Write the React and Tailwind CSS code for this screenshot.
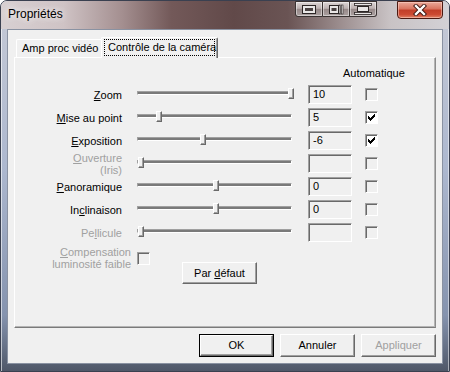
import React from "react";

const Check = () => (
  <svg width="7" height="7" viewBox="0 0 7 7" shapeRendering="crispEdges">
    {[2, 3, 4, 3, 2, 1, 0].map((t, i) => (
      <rect key={i} x={i} y={t} width="1" height="3" fill="#000" />
    ))}
  </svg>
);

const Checkbox = ({ checked }) => (
  <div
    className={`w-[13px] h-[13px] shrink-0 border border-t-[#a0a0a0] border-l-[#a0a0a0] border-b-white border-r-white shadow-[inset_1px_1px_0_#696969] flex items-center justify-center ${
      checked ? "bg-white" : "bg-[#f0f0f0]"
    }`}
  >
    {checked && <Check />}
  </div>
);

const Slider = ({ thumb }) => (
  <div className="relative w-[155px] h-[19px] shrink-0 pt-[6px]">
    <div className="h-[4px] border-t border-l border-t-[#a0a0a0] border-l-[#a0a0a0] border-b border-r border-b-white border-r-white bg-[#7a7a7a]" />
    <div
      className={`absolute top-[3px] ${thumb} w-[6px] h-[11px] bg-[#f0f0f0] border border-t-white border-l-white border-r-[#696969] border-b-[#696969] shadow-[inset_-1px_-1px_0_#a0a0a0]`}
    />
  </div>
);

const Row = ({ label, thumb, value, checked, disabled }) => (
  <div className="flex items-center h-[19px]">
    <div
      className={`w-[107px] shrink-0 text-right leading-[12px] ${
        disabled ? "text-[#a0a0a0]" : "text-black"
      }`}
    >
      {label}
    </div>
    <div className="ml-[15px]">
      <Slider thumb={thumb} />
    </div>
    <div className="ml-[16px] w-[44px] h-[19px] shrink-0 border border-t-[#a0a0a0] border-l-[#a0a0a0] border-b-white border-r-white shadow-[inset_1px_1px_0_#696969] bg-[#f0f0f0] pl-[4px] flex items-center">
      {value}
    </div>
    <div className="ml-[13px]">
      <Checkbox checked={checked} />
    </div>
  </div>
);

const raised =
  "bg-[#f0f0f0] border border-t-white border-l-white border-r-[#696969] border-b-[#696969] shadow-[inset_-1px_-1px_0_#a0a0a0] flex items-center justify-center";

const rows = [
  { label: <><u>Z</u>oom</>, thumb: "left-[151px]", value: "10", checked: false },
  { label: <><u>M</u>ise au point</>, thumb: "left-[19px]", value: "5", checked: true },
  { label: <><u>E</u>xposition</>, thumb: "left-[63px]", value: "-6", checked: true },
  { label: <><u>O</u>uverture<br />(Iris)</>, thumb: "left-[1px]", value: "", checked: false, disabled: true },
  { label: <><u>P</u>anoramique</>, thumb: "left-[76px]", value: "0", checked: false },
  { label: <>In<u>c</u>linaison</>, thumb: "left-[76px]", value: "0", checked: false },
  { label: <>Pe<u>l</u>licule</>, thumb: "left-[1px]", value: "", checked: false, disabled: true },
];

const capBtn =
  "h-[16px] border border-[#3b3333] bg-[linear-gradient(180deg,#dcd4d4_0%,#bdb2b2_45%,#978989_52%,#aaa0a0_100%)] shadow-[inset_0_0_0_1px_rgba(255,255,255,0.45)] flex items-center justify-center";

export default function App() {
  return (
    <div className="w-[450px] h-[372px] overflow-hidden font-['Liberation_Sans',Arial,sans-serif] text-[11px] leading-[13px] text-black">
      <div className="w-full h-full flex flex-col rounded-t-[7px] border border-[#3a4050] bg-[linear-gradient(180deg,#c6cad6_0%,#adb8cf_45%,#8593ae_85%,#4f5768_100%)] shadow-[inset_1px_0_0_rgba(255,255,255,0.6),inset_-1px_0_0_rgba(255,255,255,0.5)]">
        {/* title bar */}
        <div className="h-[28px] shrink-0 flex items-start rounded-t-[6px] bg-[linear-gradient(90deg,#d8d0d2_0%,#cfc3c5_14%,#a48f90_27%,#735959_38%,#614949_52%,#6a5454_64%,#9d8f90_76%,#c9c3c5_87%,#d3d1d6_100%)]">
          <div className="ml-[7px] mt-[6px] text-[12px] leading-[15px] text-black [text-shadow:0_0_6px_rgba(255,255,255,0.9),0_0_10px_rgba(255,255,255,0.7)]">
            Propriétés
          </div>
          <div className="ml-auto flex items-start">
            <div className="flex">
              <div className={`${capBtn} w-[28px] rounded-bl-[3px]`}>
                <svg width="16" height="11" viewBox="0 0 16 11">
                  <rect x="1.5" y="1.5" width="13" height="8" fill="#e9e6e6" stroke="#2c2626" />
                  <rect x="4" y="4" width="8" height="3" fill="#4a4242" />
                </svg>
              </div>
              <div className={`${capBtn} w-[27px] border-l-0`}>
                <svg width="16" height="11" viewBox="0 0 16 11">
                  <rect x="1.5" y="1.5" width="9" height="8" fill="#e9e6e6" stroke="#2c2626" />
                  <rect x="3.5" y="4" width="5" height="3" fill="#4a4242" />
                  <rect x="11" y="1" width="1.6" height="9" fill="#e9e6e6" stroke="#2c2626" strokeWidth="0.6" />
                  <rect x="13.4" y="1" width="1.6" height="9" fill="#e9e6e6" stroke="#2c2626" strokeWidth="0.6" />
                </svg>
              </div>
              <div className={`${capBtn} w-[27px] border-l-0 rounded-br-[3px]`}>
                <svg width="18" height="12" viewBox="0 0 18 12">
                  <rect x="0.5" y="0.5" width="17" height="2" fill="#e9e6e6" stroke="#2c2626" strokeWidth="0.8" />
                  <rect x="3.5" y="3.5" width="11" height="5" fill="#e9e6e6" stroke="#2c2626" />
                  <rect x="0.5" y="9.5" width="17" height="2" fill="#e9e6e6" stroke="#2c2626" strokeWidth="0.8" />
                </svg>
              </div>
            </div>
            <div className="ml-[20px] mr-[6px] w-[46px] h-[18px] rounded-b-[4px] border border-[#4b1a12] bg-[linear-gradient(180deg,#eaa99a_0%,#d97561_42%,#c23f29_52%,#cc4a32_78%,#e08266_100%)] shadow-[inset_0_0_0_1px_rgba(255,215,205,0.5)] flex items-center justify-center">
              <svg width="14" height="12" viewBox="0 0 14 12">
                <path d="M3 2 L11 10 M11 2 L3 10" stroke="#3b1510" strokeWidth="4.2" strokeLinecap="square" />
                <path d="M3 2 L11 10 M11 2 L3 10" stroke="#ffffff" strokeWidth="2.4" strokeLinecap="square" />
              </svg>
            </div>
          </div>
        </div>

        {/* frame body */}
        <div className="flex-1 flex flex-col px-[6px] pb-[7px]">
          <div className="flex-1 border border-[#8a92a2] bg-[#f0f0f0] pt-[7px] px-[6px] pb-[6px] flex flex-col">
            {/* tabs */}
            <div className="h-[20px] flex items-end pl-[2px]">
              <div className="w-[85px] h-[18px] border-t border-l border-t-white border-l-white bg-[#f0f0f0] pl-[5px] pt-[2px] rounded-tl-[2px] whitespace-nowrap">
                Amp proc vidéo
              </div>
              <div className="relative z-10 w-[117px] h-[21px] -mb-[1px] border-t border-l border-r border-t-white border-l-white border-r-[#696969] shadow-[inset_-1px_0_0_#a0a0a0] bg-[#f0f0f0] px-[2px] pt-[1px] rounded-t-[2px]">
                <div className="h-[17px] border border-dotted border-black pl-[3px] flex items-center whitespace-nowrap">
                  Contrôle de la caméra
                </div>
              </div>
            </div>

            {/* panel */}
            <div className="h-[271px] border border-t-white border-l-white border-r-[#8c8c8c] border-b-[#7a7a7a] shadow-[inset_-1px_-1px_0_#b4b4b4] pt-[9px]">
              <div className="pl-[328px] h-[12px] leading-[12px]">Automatique</div>
              <div className="mt-[6px] flex flex-col gap-[4px]">
                {rows.map((r, i) => (
                  <Row key={i} {...r} />
                ))}
              </div>
              <div className="mt-[4px] flex items-start">
                <div className="w-[116px] shrink-0 text-right leading-[12px] text-[#a0a0a0]">
                  <u>C</u>ompensation
                  <br />
                  luminosité faible
                </div>
                <div className="ml-[6px] mt-[6px]">
                  <Checkbox checked={false} />
                </div>
                <div className={`ml-[32px] mt-[16px] w-[75px] h-[22px] ${raised}`}>
                  <span className="whitespace-pre">
                    Par <u>d</u>éfaut
                  </span>
                </div>
              </div>
            </div>

            {/* buttons */}
            <div className="mt-[6px] flex justify-end gap-[6px]">
              <div className="w-[75px] h-[23px] border border-black">
                <div className={`w-full h-full ${raised}`}>OK</div>
              </div>
              <div className={`w-[75px] h-[23px] ${raised}`}>Annuler</div>
              <div className={`w-[75px] h-[23px] ${raised} text-[#a0a0a0]`}>Appliquer</div>
            </div>
          </div>
        </div>
      </div>
    </div>
  );
}
